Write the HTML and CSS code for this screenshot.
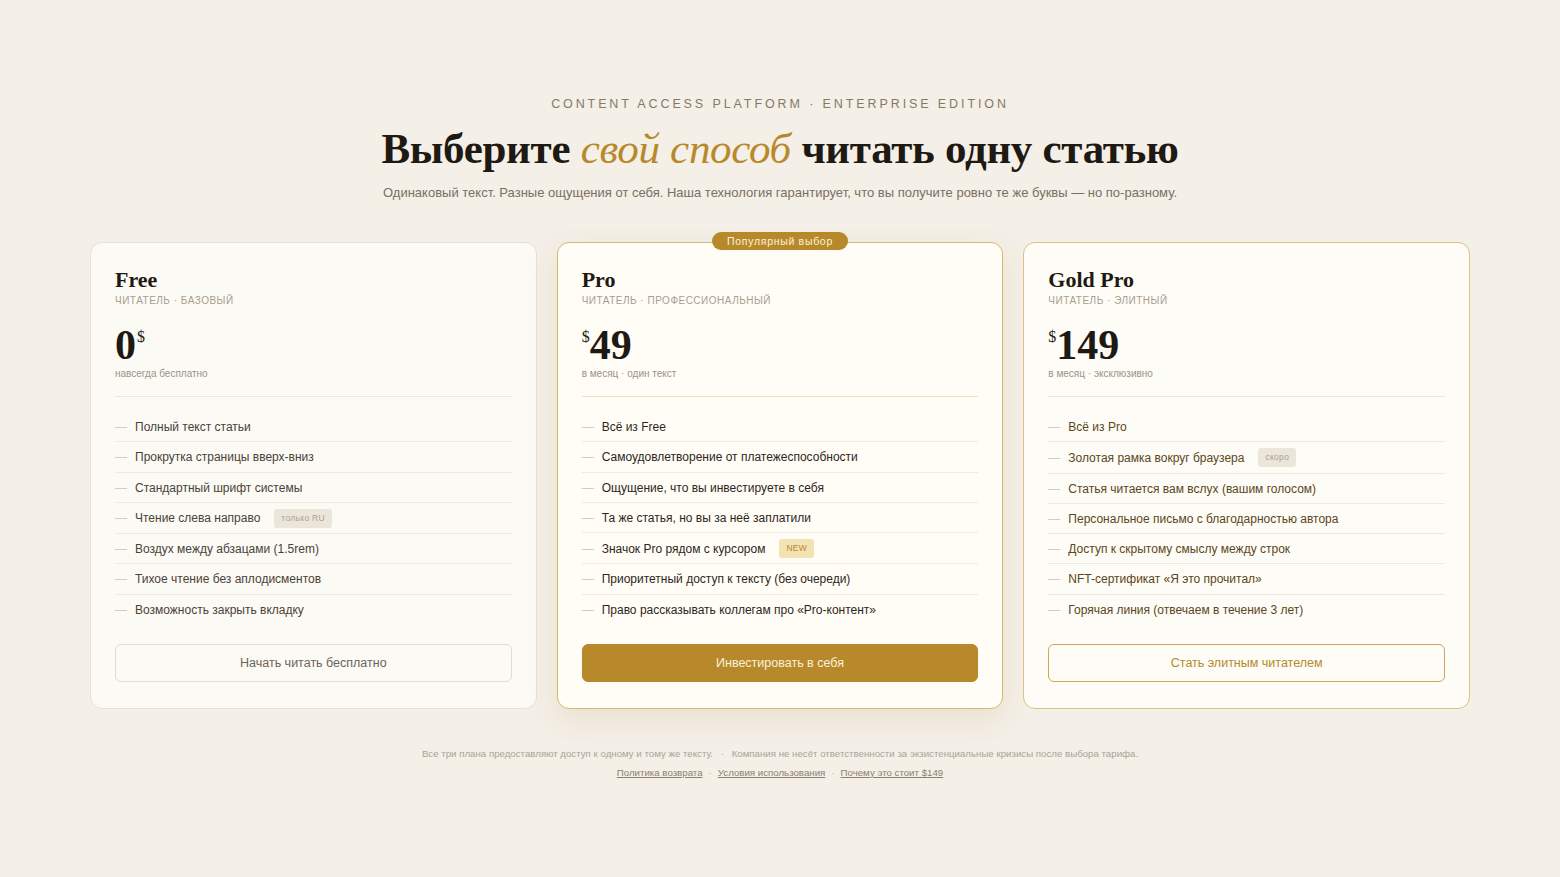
FILE: index.html
```html
<!DOCTYPE html>
<html lang="ru">
<head>
<meta charset="utf-8">
<title>Pricing</title>
<link rel="stylesheet" href="styles.css">
</head>
<body>
<main class="page">
  <header class="hero">
    <div class="eyebrow">CONTENT ACCESS PLATFORM · ENTERPRISE EDITION</div>
    <h1 class="title">Выберите <em>свой способ</em> читать одну статью</h1>
    <p class="lead">Одинаковый текст. Разные ощущения от себя. Наша технология гарантирует, что вы получите ровно те же буквы — но по-разному.</p>
  </header>

  <section class="plans">
    <article class="card card-free">
      <h2 class="plan-name">Free</h2>
      <div class="plan-tag">ЧИТАТЕЛЬ · БАЗОВЫЙ</div>
      <div class="price"><span class="amount">0</span><sup class="cur">$</sup></div>
      <div class="price-note">навсегда бесплатно</div>
      <ul class="features">
        <li><span class="dash">—</span>Полный текст статьи</li>
        <li><span class="dash">—</span>Прокрутка страницы вверх-вниз</li>
        <li><span class="dash">—</span>Стандартный шрифт системы</li>
        <li><span class="dash">—</span>Чтение слева направо<span class="badge badge-grey">только RU</span></li>
        <li><span class="dash">—</span>Воздух между абзацами (1.5rem)</li>
        <li><span class="dash">—</span>Тихое чтение без аплодисментов</li>
        <li><span class="dash">—</span>Возможность закрыть вкладку</li>
      </ul>
      <button class="btn btn-free">Начать читать бесплатно</button>
    </article>

    <article class="card card-pro">
      <div class="popular">Популярный выбор</div>
      <h2 class="plan-name">Pro</h2>
      <div class="plan-tag">ЧИТАТЕЛЬ · ПРОФЕССИОНАЛЬНЫЙ</div>
      <div class="price"><sup class="cur">$</sup><span class="amount">49</span></div>
      <div class="price-note">в месяц · один текст</div>
      <ul class="features">
        <li><span class="dash">—</span>Всё из Free</li>
        <li><span class="dash">—</span>Самоудовлетворение от платежеспособности</li>
        <li><span class="dash">—</span>Ощущение, что вы инвестируете в себя</li>
        <li><span class="dash">—</span>Та же статья, но вы за неё заплатили</li>
        <li><span class="dash">—</span>Значок Pro рядом с курсором<span class="badge badge-new">NEW</span></li>
        <li><span class="dash">—</span>Приоритетный доступ к тексту (без очереди)</li>
        <li><span class="dash">—</span>Право рассказывать коллегам про «Pro-контент»</li>
      </ul>
      <button class="btn btn-pro">Инвестировать в себя</button>
    </article>

    <article class="card card-gold">
      <h2 class="plan-name">Gold Pro</h2>
      <div class="plan-tag">ЧИТАТЕЛЬ · ЭЛИТНЫЙ</div>
      <div class="price"><sup class="cur">$</sup><span class="amount">149</span></div>
      <div class="price-note">в месяц · эксклюзивно</div>
      <ul class="features">
        <li><span class="dash">—</span>Всё из Pro</li>
        <li><span class="dash">—</span>Золотая рамка вокруг браузера<span class="badge badge-grey">скоро</span></li>
        <li><span class="dash">—</span>Статья читается вам вслух (вашим голосом)</li>
        <li><span class="dash">—</span>Персональное письмо с благодарностью автора</li>
        <li><span class="dash">—</span>Доступ к скрытому смыслу между строк</li>
        <li><span class="dash">—</span>NFT-сертификат «Я это прочитал»</li>
        <li><span class="dash">—</span>Горячая линия (отвечаем в течение 3 лет)</li>
      </ul>
      <button class="btn btn-gold">Стать элитным читателем</button>
    </article>
  </section>

  <footer class="foot">
    <p class="foot-line">Все три плана предоставляют доступ к одному и тому же тексту. <span class="sep">·</span> Компания не несёт ответственности за экзистенциальные кризисы после выбора тарифа.</p>
    <p class="foot-links"><a href="#">Политика возврата</a><span class="sep">·</span><a href="#">Условия использования</a><span class="sep">·</span><a href="#">Почему это стоит $149</a></p>
  </footer>
</main>
</body>
</html>
```

FILE: styles.css
```css
* { box-sizing: border-box; }
html, body { margin: 0; padding: 0; }
body {
  background: #f4efe7;
  font-family: "Liberation Sans", Arial, sans-serif;
  color: #2b251d;
}
.page {
  max-width: 1380px;
  margin: 0 auto;
  padding-top: 95px;
}
.hero { text-align: center; }
.eyebrow {
  font-size: 12.5px;
  line-height: 18px;
  letter-spacing: 2.9px;
  color: #857a68;
}
.title {
  margin: 9px 0 0;
  font-family: "Liberation Serif", "Times New Roman", serif;
  font-weight: 700;
  font-size: 43px;
  line-height: 53px;
  color: #1e1912;
  letter-spacing: -0.3px;
}
.title em { color: #b8892b; font-style: italic; font-weight: 400; }
.lead {
  margin: 8px 0 0;
  font-size: 13px;
  line-height: 20px;
  color: #7a7062;
}
.plans {
  margin-top: 39px;
  display: grid;
  grid-template-columns: repeat(3, 1fr);
  gap: 20px;
}
.card {
  position: relative;
  background: #fcfaf5;
  border: 1px solid #e7e0d3;
  border-radius: 12px;
  padding: 24px 24px 26px;
  display: flex;
  flex-direction: column;
}
.card-pro {
  background: #fffdf6;
  border-color: #d6b86f;
  box-shadow: 0 10px 30px rgba(160, 120, 40, 0.12);
}
.card-gold {
  background: #fefcf6;
  border-color: #dcc27f;
}
.popular {
  position: absolute;
  top: -11px;
  left: 50%;
  transform: translateX(-50%);
  background: #b8892b;
  color: #fbf1dc;
  font-size: 10.5px;
  line-height: 18px;
  letter-spacing: 0.7px;
  padding: 0 15px;
  border-radius: 10px;
  white-space: nowrap;
}
.plan-name {
  margin: 0;
  font-family: "Liberation Serif", "Times New Roman", serif;
  font-weight: 700;
  font-size: 22px;
  line-height: 26px;
  color: #1e1912;
}
.plan-tag {
  margin-top: 1px;
  font-size: 10px;
  line-height: 14px;
  letter-spacing: 0.5px;
  color: #a79d8f;
}
.price {
  margin-top: 16px;
  font-family: "Liberation Serif", "Times New Roman", serif;
  font-weight: 700;
  color: #1e1912;
  line-height: 42px;
  height: 42px;
  display: flex;
  align-items: flex-start;
}
.amount { font-size: 42px; }
.cur {
  font-size: 16px;
  font-weight: 400;
  line-height: 16px;
  margin-top: 5px;
  vertical-align: baseline;
}
.card-free .cur { margin-left: 1px; }
.price-note {
  margin-top: 1px;
  font-size: 10px;
  line-height: 14px;
  color: #9d9385;
  padding-bottom: 15px;
  border-bottom: 1px solid #ece6db;
}
.card-pro .price-note { border-bottom-color: #efe2bf; }
.features {
  list-style: none;
  margin: 15px 0 0;
  padding: 0;
}
.features li {
  display: flex;
  align-items: center;
  font-size: 12px;
  line-height: 18px;
  padding: 6px 0 5.25px;
  border-bottom: 1px solid #efeae1;
  color: #4a4238;
}
.features li:last-child { border-bottom: none; }
.card-pro .features li { color: #2d261c; border-bottom-color: #f1ece1; }
.card-gold .features li { color: #5b4620; }
.dash {
  color: #d5cbbb;
  width: 20px;
  flex: none;
  font-size: 12px;
}
.badge {
  margin-left: 14px;
  font-size: 8.5px;
  line-height: 19px;
  padding: 0 7px;
  border-radius: 3px;
  letter-spacing: 0.3px;
}
.badge-grey { background: #ece6da; color: #aaa093; }
.badge-new { background: #f3e3b4; color: #b8892b; }
.btn {
  margin-top: 20px;
  height: 38px;
  border-radius: 6px;
  font-family: "Liberation Sans", Arial, sans-serif;
  font-size: 12.5px;
  cursor: pointer;
  width: 100%;
}
.btn-free {
  background: transparent;
  border: 1px solid #e3dbcd;
  color: #6d6458;
}
.btn-pro {
  background: #b8892b;
  border: 1px solid #b8892b;
  color: #faf1dd;
}
.btn-gold {
  background: transparent;
  border: 1px solid #cda756;
  color: #b8892b;
}
.foot {
  margin-top: 35px;
  text-align: center;
  font-size: 9.7px;
  line-height: 19px;
  color: #aca395;
}
.foot p { margin: 0; }
.foot-line .sep { margin: 0 5px; }
.foot-links { color: #8b8171; }
.foot-links a { color: #8b8171; text-decoration: underline; }
.foot-links .sep { margin: 0 6px; color: #b2a99b; }
```
